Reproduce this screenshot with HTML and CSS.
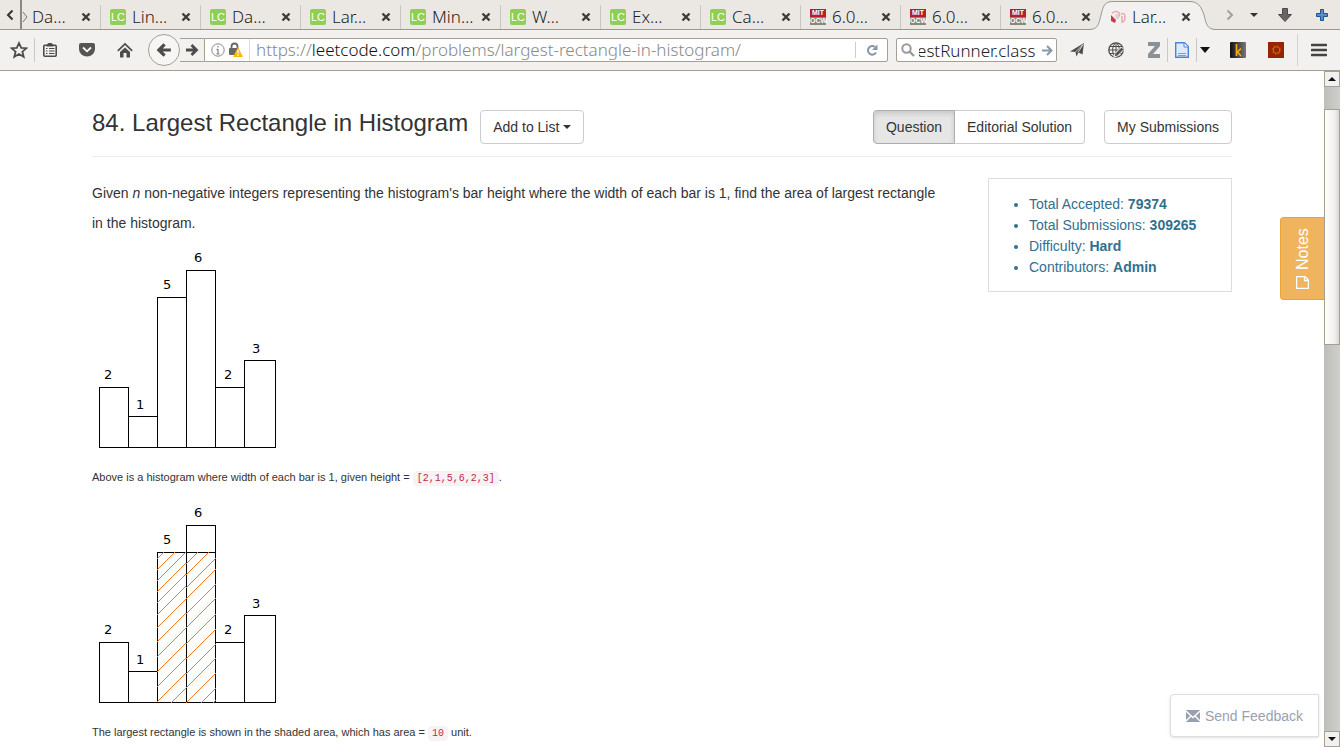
FILE: index.html
```html
<!DOCTYPE html>
<html lang="en">
<head>
<meta charset="utf-8">
<title>Largest Rectangle in Histogram</title>
<link rel="stylesheet" href="styles.css">
</head>
<body>
<header class="browser">
  <nav class="tabs" aria-label="Open tabs">
    <button class="tabs-prev" aria-label="Previous tabs"><svg width="8" height="12" viewBox="0 0 8 12"><path d="M6.500 1.500 2 6 6.500 10.500" fill="none" stroke="#2e3436" stroke-width="2"/></svg></button>
    <div class="tab tab-first"><svg class="cut" width="6" height="14" viewBox="0 0 6 14"><path d="M1 2 5 7 1 12" fill="#dfe3dc" stroke="#777" /></svg><span>Da…</span><button aria-label="Close tab"><svg width="10" height="10" viewBox="0 0 10 10"><path id="x" d="M1.500 1.500 8.500 8.500M8.500 1.500 1.500 8.500" stroke="#3c3c3a" stroke-width="2.400" fill="none"/></svg></button></div>
    <div class="tab"><b class="lc">LC</b><span>Lin…</span><button aria-label="Close tab"><svg width="10" height="10"><use href="#x"/></svg></button></div>
    <div class="tab"><b class="lc">LC</b><span>Da…</span><button aria-label="Close tab"><svg width="10" height="10"><use href="#x"/></svg></button></div>
    <div class="tab"><b class="lc">LC</b><span>Lar…</span><button aria-label="Close tab"><svg width="10" height="10"><use href="#x"/></svg></button></div>
    <div class="tab"><b class="lc">LC</b><span>Min…</span><button aria-label="Close tab"><svg width="10" height="10"><use href="#x"/></svg></button></div>
    <div class="tab"><b class="lc">LC</b><span>W…</span><button aria-label="Close tab"><svg width="10" height="10"><use href="#x"/></svg></button></div>
    <div class="tab"><b class="lc">LC</b><span>Ex…</span><button aria-label="Close tab"><svg width="10" height="10"><use href="#x"/></svg></button></div>
    <div class="tab"><b class="lc">LC</b><span>Ca…</span><button aria-label="Close tab"><svg width="10" height="10"><use href="#x"/></svg></button></div>
    <div class="tab"><b class="mit"><i>MIT</i><i>OCW</i></b><span>6.0…</span><button aria-label="Close tab"><svg width="10" height="10"><use href="#x"/></svg></button></div>
    <div class="tab"><b class="mit"><i>MIT</i><i>OCW</i></b><span>6.0…</span><button aria-label="Close tab"><svg width="10" height="10"><use href="#x"/></svg></button></div>
    <div class="tab tab-plain"><b class="mit"><i>MIT</i><i>OCW</i></b><span>6.0…</span><button aria-label="Close tab"><svg width="10" height="10"><use href="#x"/></svg></button></div>
    <div class="tab tab-plain tab-active">
      <svg class="tab-shape" width="126" height="30" viewBox="0 0 126 30"><path d="M0 30V29.500C9 29 9 22 11 15C13 7 14 1.500 23 1.500H99C108 1.500 111 6 114 15C116 22 116 29 125 29.500V30Z" fill="#f2f1ef"/><path d="M0 29.500C9 29 9 22 11 15C13 7 14 1.500 23 1.500H99C108 1.500 111 6 114 15C116 22 116 29 125 29.500" fill="none" stroke="#9a9790"/></svg>
      <svg width="16" height="16" viewBox="0 0 16 16"><path d="M1 6 6 11 5 14 1 12Z" fill="#c43a4c"/><path d="M2 4Q7 1 9 4T6 9M11 5Q15 3 15 8T12 13V7" fill="none" stroke="#e9a9ae" stroke-width="1.500"/><path d="M5 5H9V10H6Z" fill="#dcd4d2"/></svg><span>Lar…</span><button aria-label="Close tab"><svg width="10" height="10"><use href="#x"/></svg></button></div>
    <div class="tab-tools">
      <button aria-label="Next tabs"><svg width="8" height="12" viewBox="0 0 8 12"><path d="M1.500 1.500 6 6 1.500 10.500" fill="none" stroke="#a3a19c" stroke-width="2"/></svg></button>
      <button aria-label="List all tabs"><svg width="8" height="4" viewBox="0 0 8 4"><path d="M0 0H8L4 4Z" fill="#2e3436"/></svg></button>
      <button class="wide" aria-label="Downloads"><svg width="14" height="14" viewBox="0 0 14 14"><path d="M4.500 .5H9.500V6.500H13.500L7 13.500 .5 6.500H4.500Z" fill="#666" stroke="#4a4a4a"/></svg></button>
      <button class="wide" aria-label="New tab"><svg width="12" height="12" viewBox="0 0 12 12"><path d="M4.500 .5H7.500V4.500H11.500V7.500H7.500V11.500H4.500V7.500H.5V4.500H4.500Z" fill="#5b8cc9" stroke="#23508e"/></svg></button>
    </div>
  </nav>

  <div class="toolbar">
    <div class="marks">
      <button aria-label="Bookmark"><svg width="18" height="18" viewBox="0 0 18 18"><path d="M9 2 11.200 6.800 16.300 7.200 12.400 10.700 13.700 15.800 9 13 4.300 15.800 5.600 10.700 1.700 7.200 6.800 6.800Z" fill="none" stroke="#4c4c4c" stroke-width="1.800"/></svg></button>
      <button class="ruled" aria-label="Bookmarks list"><svg width="14" height="16" viewBox="0 0 14 16"><rect x=".8" y="3.300" width="12.400" height="11" rx="1" fill="none" stroke="#4c4c4c" stroke-width="1.600"/><path d="M3.500 3 5.500 1H8.500L10.500 3V4.500H3.500Z" fill="#4c4c4c"/><path d="M3 6.500H4.500M6 6.500H11.500M3 9H4.500M6 9H11.500M3 11.500H4.500M6 11.500H11.500" stroke="#4c4c4c" stroke-width="1.200"/></svg></button>
    </div>
    <button aria-label="Save to Pocket"><svg width="16" height="14" viewBox="0 0 16 14"><path d="M2 0H14Q16 0 16 2V6A8 7.500 0 0 1 0 6V2Q0 0 2 0Z" fill="#555"/><path d="M4 4.500 8 8.300 12 4.500" fill="none" stroke="#fff" stroke-width="1.800"/></svg></button>
    <button aria-label="Home"><svg width="16" height="16" viewBox="0 0 16 16"><path d="M.8 8.800 8 2 15.200 8.800" fill="none" stroke="#4c4c4c" stroke-width="1.700"/><path d="M3 10 8 5.500 13 10V15.500H9.500V11H6.500V15.500H3Z" fill="#4c4c4c"/></svg></button>
    <form class="location">
      <button type="button" class="back" aria-label="Back"><svg class="flip" width="16" height="16" viewBox="0 0 14 14"><path id="arrow" d="M1 7H11M6.500 2 11.500 7 6.500 12" fill="none" stroke="#4c4c4c" stroke-width="2.800"/></svg></button>
      <button type="button" class="forward" aria-label="Forward"><svg width="14" height="14" viewBox="0 0 14 14"><use href="#arrow"/></svg></button>
      <div class="urlbar">
        <svg width="14" height="14" viewBox="0 0 14 14"><circle cx="7" cy="7" r="6.200" fill="none" stroke="#888"/><path d="M7 3V4.600M7 6V11M5.500 6.500H7M5.500 10.800H8.500" stroke="#888" stroke-width="1.300"/></svg>
        <svg width="14" height="16" viewBox="0 0 14 16"><path d="M2.500 7V4.500A3 3 0 0 1 8.500 4.500V7" fill="none" stroke="#666" stroke-width="1.800"/><rect x="0" y="6" width="10" height="7" rx="1" fill="#666"/><path d="M9 5 14 15H4Z" fill="#fdb912"/><path d="M9 8V11.500M9 12.500V14" stroke="#fff" stroke-width="1.200"/></svg>
        <a class="url" href="https://leetcode.com/problems/largest-rectangle-in-histogram/">https://<b>leetcode.com</b>/problems/largest-rectangle-in-histogram/</a>
        <button type="button" class="reload" aria-label="Reload"><svg width="12" height="12" viewBox="0 0 12 12"><path d="M9 3A4.300 4.300 0 1 0 10 8.500" fill="none" stroke="#8797a8" stroke-width="2"/><path d="M11.500 .5V6H6Z" fill="#8797a8"/></svg></button>
      </div>
    </form>
    <form class="search">
      <svg width="14" height="14" viewBox="0 0 14 14"><circle cx="5.500" cy="5.500" r="4.200" fill="none" stroke="#999" stroke-width="2"/><path d="M8.500 8.500 13 13" stroke="#999" stroke-width="2.400"/></svg>
      <input type="text" aria-label="Search" value="estRunner.class">
      <button type="button" aria-label="Go"><svg width="11" height="11" viewBox="0 0 11 11"><path d="M0 5.500H9M5 1 9.500 5.500 5 10" fill="none" stroke="#8797a8" stroke-width="2"/></svg></button>
    </form>
    <div class="addons">
      <button aria-label="Send tab"><svg width="16" height="16" viewBox="0 0 16 16"><path d="M0 9.500 14 1 12.500 12.500 8.500 10.500 6.500 14.500 5.500 10Z" fill="#4c4c4c"/><path d="M5.500 10 13 2.500 8 10.500" stroke="#eee" fill="none" stroke-width=".8"/></svg></button>
      <button aria-label="Web tools"><svg width="18" height="18" viewBox="0 0 18 18"><circle cx="9" cy="9" r="7.200" fill="none" stroke="#4c4c4c" stroke-width="1.300"/><path d="M9 2V16M2 9H16M3 5.500H15M3 12.500H15M8 2Q3 9 8 16M10 2Q15 9 10 16" fill="none" stroke="#4c4c4c"/><path d="M7 16 8 12.500 14.500 6 17 8.500 10.500 15Z" fill="#555" stroke="#f2f1ef"/></svg></button>
      <div class="zotero">
        <button aria-label="Zotero"><svg width="14" height="16" viewBox="0 0 14 16"><path d="M1 0H13V4L6 12H13V16H1V12L8 4H1Z" fill="#8a9097"/></svg></button>
        <button class="ruled page-btn" aria-label="Save page"><svg width="14" height="16" viewBox="0 0 14 16"><path d="M.7 .7H9.500L13.300 4.500V15.300H.7Z" fill="#dcebfb" stroke="#4a86cf" stroke-width="1.400"/><path d="M9 1V5H13" fill="#fff" stroke="#4a86cf"/><path d="M3 11.500H11M3 13.500H11" stroke="#5aaeea"/></svg></button>
        <button class="ruled caret-btn" aria-label="Save options"><svg width="10" height="6" viewBox="0 0 10 6"><path d="M0 0H10L5 6Z" fill="#111"/></svg></button>
      </div>
      <button aria-label="Kindle"><svg width="16" height="16" viewBox="0 0 16 16"><defs><linearGradient id="kg"><stop stop-color="#111"/><stop offset="1" stop-color="#777"/></linearGradient></defs><rect width="16" height="16" rx="1" fill="url(#kg)"/><path d="M6.500 2V14M11 6.500 7.500 10 11 14" fill="none" stroke="#f9a71a" stroke-width="1.700"/></svg></button>
      <button aria-label="Theme"><svg width="16" height="16" viewBox="0 0 16 16"><rect width="16" height="16" fill="#972400"/><circle cx="8.500" cy="8" r="3.300" fill="none" stroke="#d07018"/><circle cx="8.500" cy="8" r="4.300" fill="none" stroke="#d07018" stroke-dasharray="1.200 2.180"/></svg></button>
    </div>
    <button class="menu" aria-label="Menu"><svg width="16" height="14" viewBox="0 0 16 14"><path d="M1 2H15M1 7H15M1 12H15" stroke="#444" stroke-width="2.600" stroke-linecap="round"/></svg></button>
  </div>
</header>

<div class="viewport">
  <main class="page">
    <div class="container">
      <div class="heading">
        <h1>84. Largest Rectangle in Histogram</h1>
        <button class="btn">Add to List <i class="caret"></i></button>
        <div class="actions">
          <div class="group"><button class="btn active">Question</button><button class="btn">Editorial Solution</button></div>
          <button class="btn">My Submissions</button>
        </div>
      </div>
      <div class="columns">
        <article>
          <p class="lead">Given <em>n</em> non-negative integers representing the histogram's bar height where the width of each bar is 1, find the area of largest rectangle in the histogram.</p>
          <svg class="chart" width="188" height="208" viewBox="0 0 188 208" role="img" aria-label="Histogram">
            <g id="bars">
              <path d="M7.500 203.500V143.500H36.500M36.500 203.500V143.500M36.500 172.500H65.500M65.500 203.500V53.500H94.500M94.500 203.500V26.500H123.500V203.500M123.500 143.500H152.500M152.500 203.500V116.500H183.500V203.500H7.500"/>
              <text x="12" y="135">2</text><text x="44" y="165">1</text><text x="71" y="45">5</text><text x="102" y="18">6</text><text x="132" y="135">2</text><text x="160" y="109">3</text>
            </g>
          </svg>
          <p class="note">Above is a histogram where width of each bar is 1, given height = <code>[2,1,5,6,2,3]</code>.</p>
          <svg class="chart" width="188" height="208" viewBox="0 0 188 208" role="img" aria-label="Histogram with largest rectangle shaded">
            <clipPath id="shade"><rect x="65" y="53" width="59" height="151"/></clipPath>
            <use href="#bars"/>
            <path d="M94.500 53.500H123.500"/>
            <g class="hatch" clip-path="url(#shade)">
              <path d="M65 60l29-29M65 71l29-29M65 82l29-29M65 93l29-29M65 104l29-29M65 116l29-29M65 129l29-29M65 143l29-29M65 158l29-29M65 173l29-29M65 188l29-29M65 203l29-29M65 218l29-29"/>
              <path d="M94 65l30-30M94 76l30-30M94 89l30-30M94 100l30-30M94 115l30-30M94 129l30-30M94 145l30-30M94 160l30-30M94 175l30-30M94 189l30-30M94 204l30-30M94 219l30-30M94 231l30-30"/>
            </g>
          </svg>
          <p class="note">The largest rectangle is shown in the shaded area, which has area = <code>10</code> unit.</p>
        </article>
        <aside class="stats">
          <ul>
            <li>Total Accepted: <strong>79374</strong></li>
            <li>Total Submissions: <strong>309265</strong></li>
            <li>Difficulty: <strong>Hard</strong></li>
            <li>Contributors: <strong>Admin</strong></li>
          </ul>
        </aside>
      </div>
    </div>
    <button class="notes"><svg width="13" height="13" viewBox="0 0 13 13"><path d="M.6 .6H12.400V9L9 12.400H.6ZM12.400 8.500H8.500V12.400" fill="none" stroke="#fff" stroke-width="1.300"/></svg>Notes</button>
    <button class="feedback"><svg width="14" height="12" viewBox="0 0 14 12"><rect width="14" height="12" fill="#98a1b3"/><path d="M0 1 7 7.500 14 1M0 11 5 6M14 11 9 6" fill="none" stroke="#fff" stroke-width="1.300"/></svg>Send Feedback</button>
  </main>
  <div class="scrollbar" aria-hidden="true">
    <div class="step"><svg width="8" height="4" viewBox="0 0 8 4"><path d="M0 4H8L4 0Z" fill="#111"/></svg></div>
    <div class="track"><div class="thumb"></div></div>
    <div class="step"><svg width="8" height="4" viewBox="0 0 8 4"><path d="M0 0H8L4 4Z" fill="#111"/></svg></div>
  </div>
</div>
</body>
</html>
```
FILE: styles.css
```css
* { box-sizing: border-box; }
body { margin: 0; height: 100vh; display: flex; flex-direction: column; overflow: hidden; background: #fff; color: #333; font: 14px "Liberation Sans", Arial, sans-serif; }
button { border: 0; padding: 0; background: none; font: inherit; color: inherit; display: flex; align-items: center; justify-content: center; }
svg { display: block; flex: none; }

/* Browser chrome */
.browser { flex: none; font-family: "Noto Sans", sans-serif; font-size: 17px; font-weight: 300; color: #222; }
.tabs { height: 30px; display: flex; background: #ebe8e4; border-bottom: 1px solid #9a9790; }
.tabs-prev { width: 22px; border-right: 2px solid #8a8885; }
.tab { position: relative; width: 100px; height: 24px; margin-top: 5px; padding: 0 9px; display: flex; align-items: center; border-right: 1px solid #c9c5c0; }
.tab span { position: relative; margin-left: 6px; flex: 1; white-space: nowrap; line-height: 22px; }
.tab svg { position: relative; }
.lc { flex: none; width: 16px; height: 16px; border-radius: 2px; background: #8fcf57; color: #fff; font: 11px/16px "Liberation Sans", sans-serif; text-align: center; }
.mit { flex: none; width: 16px; background: linear-gradient(#b3202a 50%, #8b8878 50%); color: #fff; font: bold 7px/8px "Liberation Sans", sans-serif; text-align: center; }
.mit i { display: block; font-style: normal; }
.tab-first { width: 79px; padding-left: 0; }
.tab-first span { margin-left: 4px; }
.tab-plain { border-right-color: transparent; }
.tab .tab-shape { position: absolute; left: -11px; top: -5px; }
.tab-tools { margin-left: auto; display: flex; }
.tab-tools button { width: 24px; }
.tab-tools .wide { width: 37px; }
.toolbar { height: 41px; display: flex; align-items: center; gap: 8px; padding-left: 4px; background: #f2f1ef; border-bottom: 1px solid #a89f93; }
.toolbar button { width: 30px; height: 24px; }
.marks, .zotero { display: flex; }
.toolbar .ruled { border-left: 1px solid #ccc8c3; }
.location { flex: 1; min-width: 0; display: flex; align-items: center; }
.toolbar .back { width: 32px; height: 32px; border: 1px solid #a89f93; border-radius: 50%; background: #f7f6f5; }
.flip { transform: scaleX(-1); }
.toolbar .forward { width: 24px; border: solid #a89f93; border-width: 1px 0; }
.urlbar { flex: 1; min-width: 0; height: 24px; display: flex; align-items: center; gap: 4px; padding-left: 6px; background: #fff; border: 1px solid #a89f93; border-radius: 0 2px 2px 0; }
.url { flex: 1; padding-left: 6px; margin-left: 2px; border-left: 1px solid #ddd; color: #888; text-decoration: none; white-space: nowrap; overflow: hidden; line-height: 22px; }
.url b { font-weight: inherit; color: #111; }
.toolbar .reload { width: 32px; height: 16px; border-left: 1px solid #ccc; }
.search { width: 161px; height: 24px; padding: 0 3px 0 4px; display: flex; align-items: center; background: #fff; border: 1px solid #a89f93; border-radius: 2px; }
.search input { flex: 1; min-width: 0; height: 22px; margin-left: 4px; padding: 0; border: 0; background: none; font: inherit; color: #222; text-indent: -2px; }
.toolbar .search button { width: 12px; }
.addons { display: flex; gap: 12px; }
.addons button { width: 26px; }
.toolbar .page-btn { width: 29px; }
.toolbar .caret-btn { width: 17px; }
.toolbar .menu { width: 43px; height: 32px; border-left: 1px solid #d5d1cc; }

/* Document area */
.viewport { flex: 1; min-height: 0; display: flex; }
.page { position: relative; flex: 1; min-width: 0; overflow: hidden; }
.container { max-width: 1140px; margin: 0 auto; padding-top: 39px; }
.heading { display: flex; align-items: flex-start; padding-bottom: 12px; border-bottom: 1px solid #eee; }
h1 { margin: 0 12px 0 0; font-size: 24px; font-weight: 400; line-height: 26px; }
.btn { height: 34px; padding: 0 12px; border: 1px solid #ccc; border-radius: 4px; background: #fff; white-space: nowrap; }
.caret { margin-left: 4px; border: 4px solid transparent; border-top-color: #333; border-bottom: 0; }
.actions { margin-left: auto; display: flex; gap: 19px; }
.group { display: flex; }
.group .btn { border-radius: 0 4px 4px 0; border-left: 0; }
.group .active { border: 1px solid #adadad; border-radius: 4px 0 0 4px; background: #e6e6e6; box-shadow: inset 0 3px 5px rgba(0,0,0,.125); }
.columns { display: flex; align-items: flex-start; gap: 44px; padding-top: 21px; }
article { flex: 1; min-width: 0; }
.lead { margin: 0 0 6px; line-height: 30px; }
.chart { margin-bottom: 15px; overflow: visible; }
.chart path { fill: none; stroke: #000; shape-rendering: crispEdges; }
.chart text { font: 13px "DejaVu Sans", sans-serif; fill: #000; }
.chart .hatch path { stroke: #f47a20; }
.note { margin: 0 0 12px; font-size: 11px; line-height: 20px; }
code { padding: 2px 4px; border-radius: 4px; background: #f9f2f4; color: #c7254e; font: 10px "Liberation Mono", monospace; }
.stats { width: 244px; padding: 15px 0 13px; border: 1px solid #ddd; color: #31708f; }
.stats ul { margin: 0; padding-left: 40px; line-height: 21px; }

/* Floating controls */
.notes { position: absolute; right: 0; top: 146px; width: 44px; height: 83px; gap: 6px; writing-mode: vertical-rl; transform: rotate(180deg); border: 1px solid #eea236; border-left: 0; border-radius: 0 4px 4px 0; background: #f0b45f; color: #fff; font-size: 16px; }
.notes svg { transform: rotate(90deg); }
.feedback { position: absolute; right: 5px; bottom: 10px; height: 43px; padding: 0 15px; gap: 5px; border: 1px solid #ddd; border-radius: 4px 0 0 4px; background: #fff; color: #98a1b3; box-shadow: 0 1px 3px rgba(0,0,0,.12); }

.scrollbar { width: 16px; display: flex; flex-direction: column; background: linear-gradient(90deg, #bdbeb9, #cfcfcb); }
.step { height: 16px; display: flex; align-items: center; justify-content: center; border: 1px solid #a89f93; background: #f3f1ef; }
.track { flex: 1; padding-top: 22px; }
.thumb { height: 38%; border: 1px solid #a89f93; background: linear-gradient(90deg, #fff, #f1efed 70%, #d9d5d0); }
```
